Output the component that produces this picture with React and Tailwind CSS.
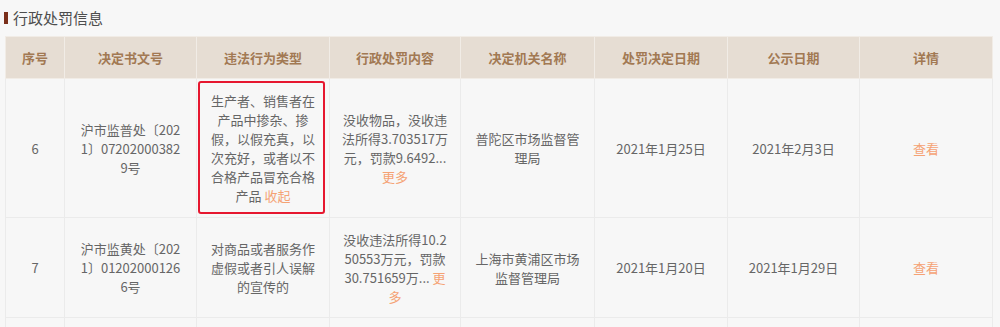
const rows = [
  {
    no: "6",
    doc: ["沪市监普处〔202", "1〕07202000382", "9号"],
    type: ["生产者、销售者在", "产品中掺杂、掺", "假，以假充真，以", "次充好，或者以不", "合格产品冒充合格"],
    typeTail: "产品",
    typeLink: "收起",
    marked: true,
    content: ["没收物品，没收违", "法所得3.703517万", "元，罚款9.6492..."],
    contentTail: "",
    contentLink: "更多",
    linkOwnLine: true,
    org: ["普陀区市场监督管", "理局"],
    decided: "2021年1月25日",
    published: "2021年2月3日",
  },
  {
    no: "7",
    doc: ["沪市监黄处〔202", "1〕01202000126", "6号"],
    type: ["对商品或者服务作", "虚假或者引人误解", "的宣传的"],
    marked: false,
    content: ["没收违法所得10.2", "50553万元，罚款"],
    contentTail: "30.751659万...",
    contentLink: ["更", "多"],
    org: ["上海市黄浦区市场", "监督管理局"],
    decided: "2021年1月20日",
    published: "2021年1月29日",
  },
];

const headers = ["序号", "决定书文号", "违法行为类型", "行政处罚内容", "决定机关名称", "处罚决定日期", "公示日期", "详情"];
const widths = ["w-[59px]", "w-[132px]", "w-[133px]", "w-[131px]", "w-[134px]", "w-[133px]", "w-[132px]", "w-[133px]"];

function Lines({ lines }) {
  return lines.map((l, i) => (
    <span key={i} className="block whitespace-nowrap">{l}</span>
  ));
}

const td = "border border-[#ebebeb] px-[6px] text-center align-middle";

export default function App() {
  return (
    <div
      className="h-[327px] w-[1000px] overflow-hidden bg-[#f7f7f7] text-[#666]"
      style={{ fontFamily: '"Noto Sans CJK SC", "Noto Sans", sans-serif' }}
    >
      <div className="flex h-[36px] items-center pb-[1px] pl-[4px]">
        <span className="h-[12px] w-[4px] bg-[#7a2f1a]" />
        <span className="ml-[5px] text-[15px] leading-[20px] text-[#4d4d4d]">行政处罚信息</span>
      </div>
      <table className="ml-[5px] w-[987px] table-fixed border-collapse text-[13px] leading-[19px]">
        <colgroup>
          {widths.map((w, i) => <col key={i} className={w} />)}
        </colgroup>
        <thead>
          <tr className="h-[42px] bg-[#e6ddd3]">
            {headers.map((h) => (
              <th key={h} className="border border-[#f1ece6] text-center align-middle text-[13px] font-bold text-[#a27953]">
                {h}
              </th>
            ))}
          </tr>
        </thead>
        <tbody>
          {rows.map((r) => (
            <tr key={r.no} className={r.marked ? "h-[139px]" : "h-[100px]"}>
              <td className={td}>{r.no}</td>
              <td className={td}><Lines lines={r.doc} /></td>
              <td className={`${td} relative`}>
                <Lines lines={r.type} />
                {r.typeTail && (
                  <span className="block whitespace-nowrap">
                    {r.typeTail} <span className="text-[#f5a274]">{r.typeLink}</span>
                  </span>
                )}
                {r.marked && (
                  <div className="pointer-events-none absolute bottom-[3px] left-[1px] right-[4px] top-[2px] rounded-[3px] border-2 border-[#e6172f]" />
                )}
              </td>
              <td className={td}>
                <Lines lines={r.content} />
                {r.linkOwnLine ? (
                  <span className="block text-[#f5a274]">{r.contentLink}</span>
                ) : (
                  <>
                    <span className="block whitespace-nowrap">
                      {r.contentTail} <span className="text-[#f5a274]">{r.contentLink[0]}</span>
                    </span>
                    <span className="block text-[#f5a274]">{r.contentLink[1]}</span>
                  </>
                )}
              </td>
              <td className={td}><Lines lines={r.org} /></td>
              <td className={td}>{r.decided}</td>
              <td className={td}>{r.published}</td>
              <td className={`${td} text-[#f5a274]`}>查看</td>
            </tr>
          ))}
          <tr className="h-[100px]">
            {headers.map((h) => <td key={h} className={td} />)}
          </tr>
        </tbody>
      </table>
    </div>
  );
}
